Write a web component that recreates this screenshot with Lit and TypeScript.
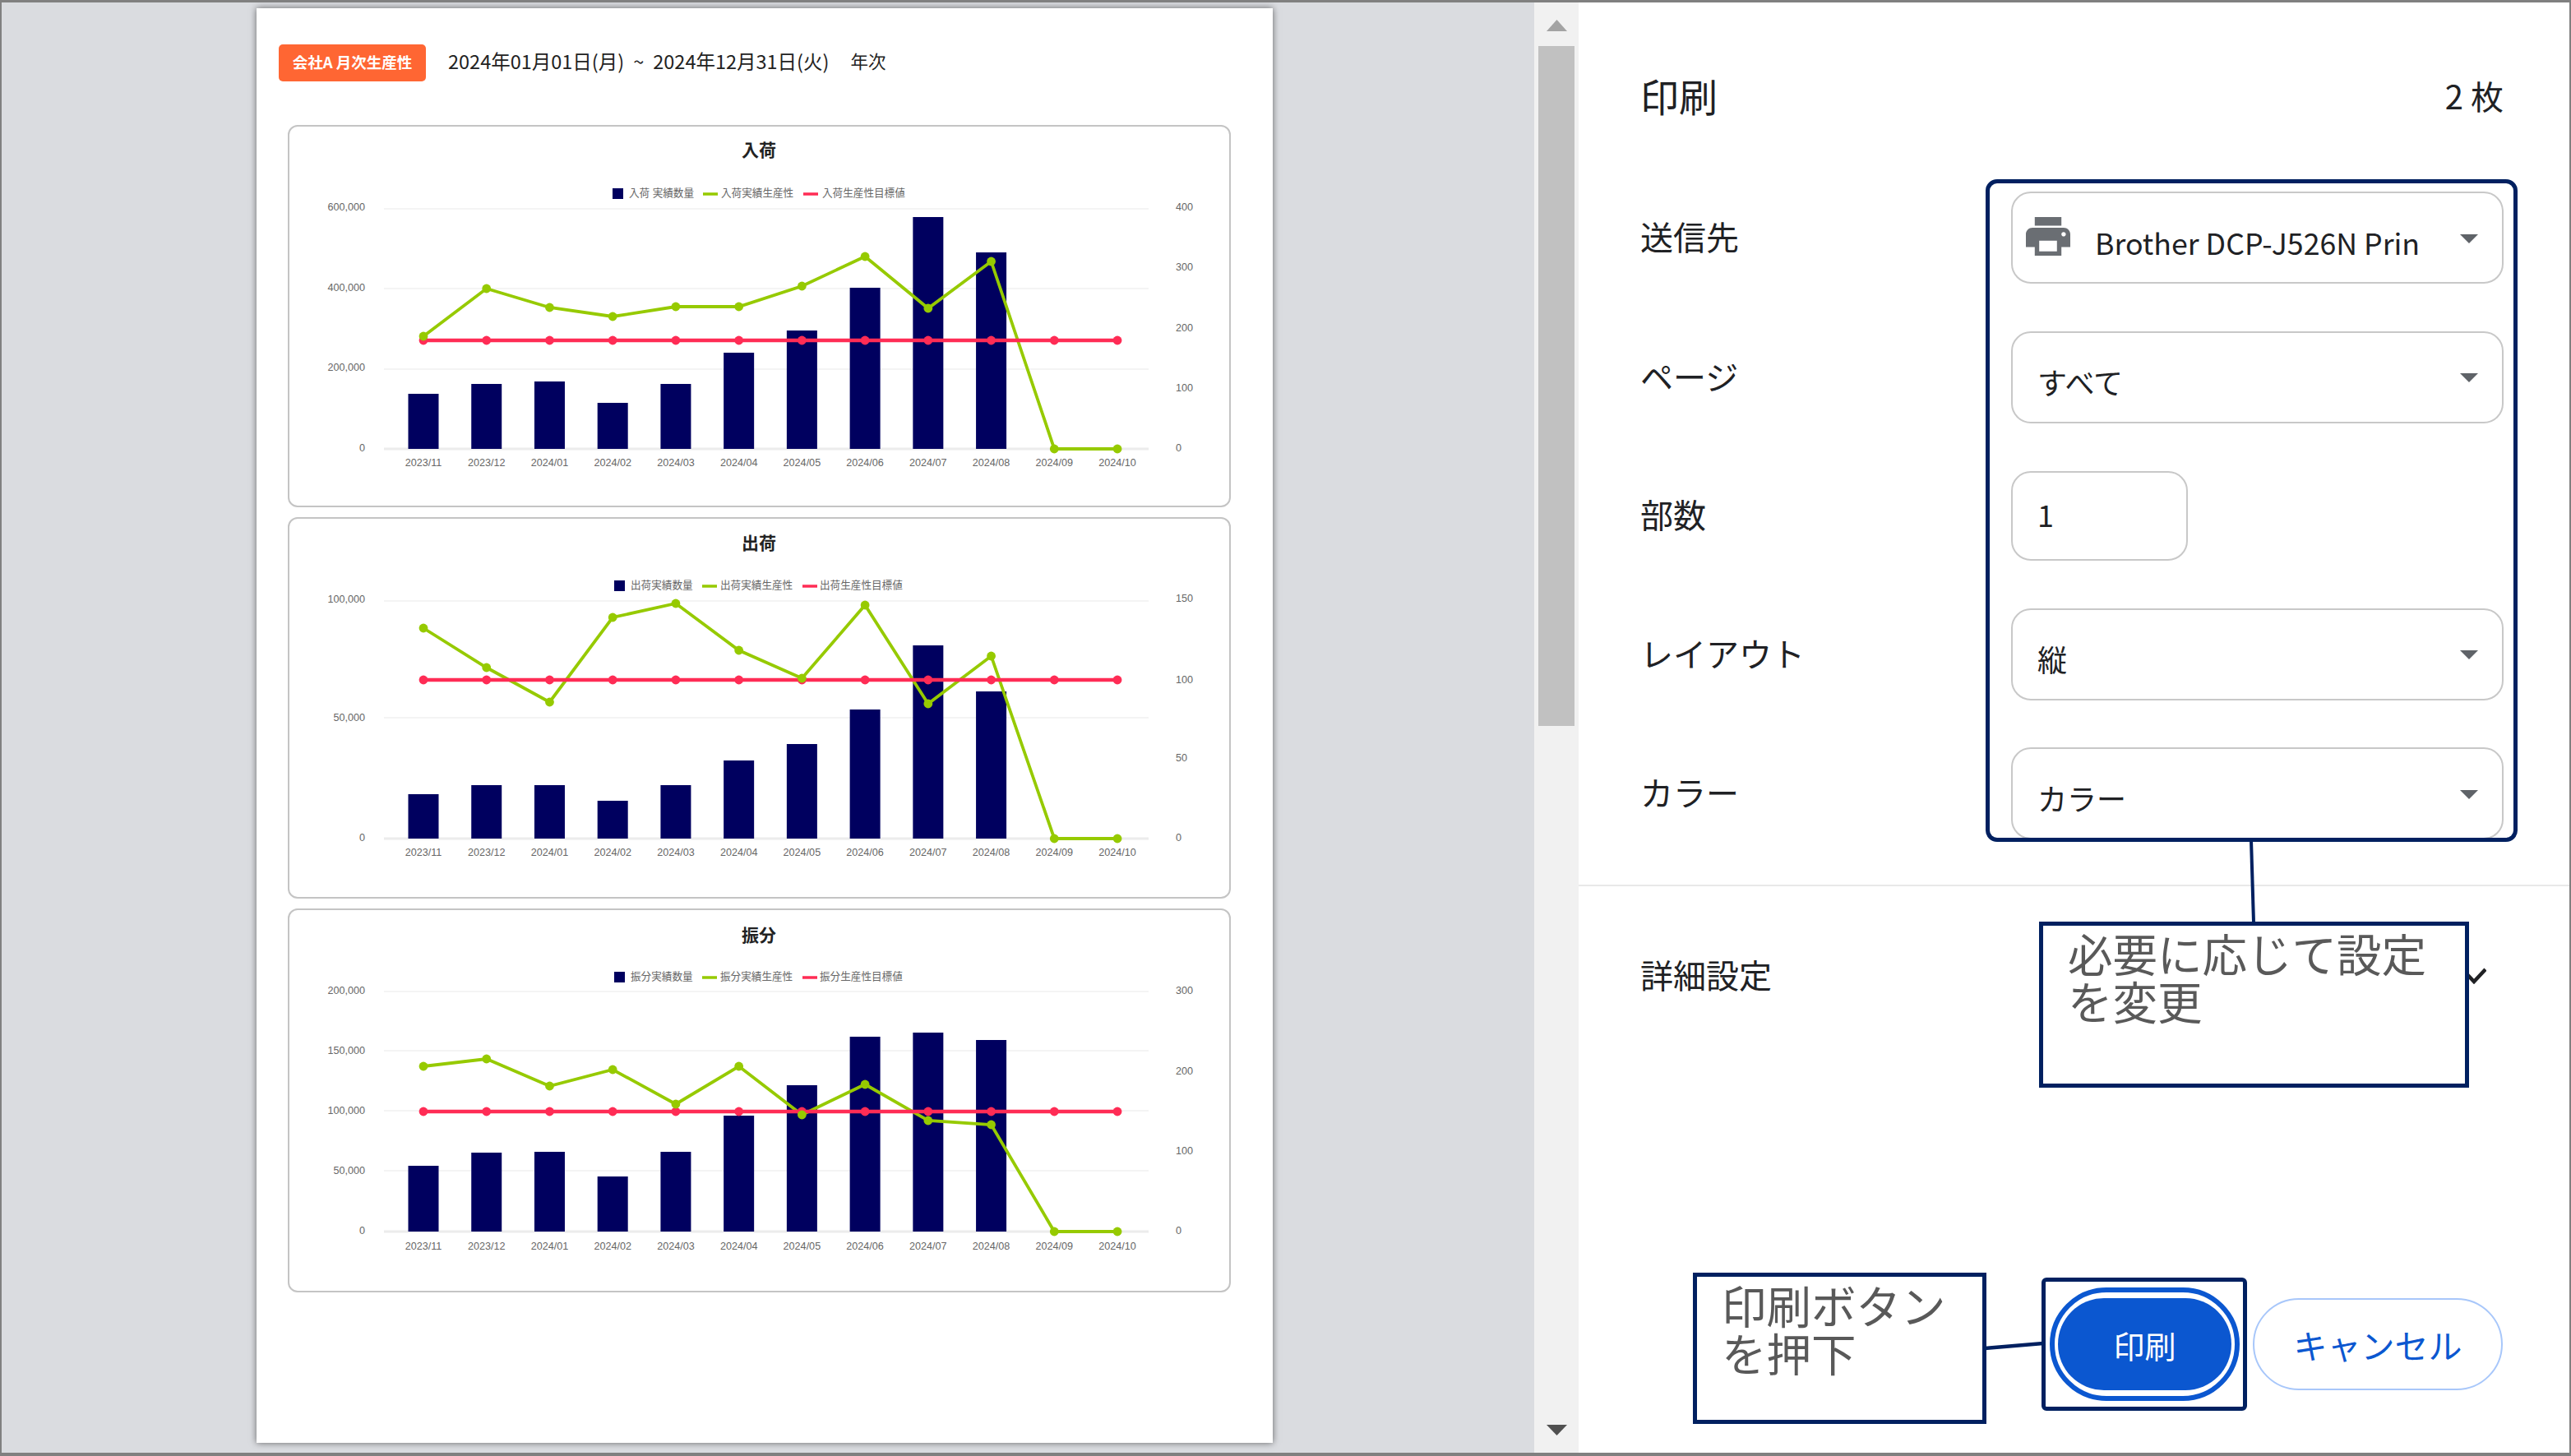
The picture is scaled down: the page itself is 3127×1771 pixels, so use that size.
import { LitElement, html, css, svg } from "lit";
import { customElement } from "lit/decorators.js";

const CATS = ["2023/11","2023/12","2024/01","2024/02","2024/03","2024/04","2024/05","2024/06","2024/07","2024/08","2024/09","2024/10"];
const X0 = 515, STEP = 76.73;
const cx = (i: number) => X0 + i * STEP;

interface Chart {
  title: string; top: number; h: number; titleY: number; legendY: number; xLabelY: number;
  legend: number[]; names: string[];
  grid: number[]; left: [string, number][]; right: [string, number][];
  bars: number[]; green: number[]; red: number;
}

const CHARTS: Chart[] = [
  { title: "入荷", top: 152, h: 465, titleY: 181, legendY: 235, xLabelY: 563,
    legend: [745, 765, 855, 877, 977, 1000],
    names: ["入荷 実績数量", "入荷実績生産性", "入荷生産性目標値"],
    grid: [254, 351, 449, 546],
    left: [["600,000", 252], ["400,000", 350], ["200,000", 447], ["0", 545]],
    right: [["400", 252], ["300", 325], ["200", 399], ["100", 472], ["0", 545]],
    bars: [479, 467, 464, 490, 467, 429, 402, 350, 264, 307],
    green: [409, 351, 374, 385, 373, 373, 348, 312, 375, 318, 546, 546], red: 414 },
  { title: "出荷", top: 630, h: 464, titleY: 660, legendY: 713, xLabelY: 1038,
    legend: [747, 767, 854, 876, 976, 997],
    names: ["出荷実績数量", "出荷実績生産性", "出荷生産性目標値"],
    grid: [732, 874, 1021],
    left: [["100,000", 730], ["50,000", 874], ["0", 1020]],
    right: [["150", 729], ["100", 828], ["50", 923], ["0", 1020]],
    bars: [967, 956, 956, 975, 956, 926, 906, 864, 786, 842],
    green: [765, 813, 855, 752, 735, 792, 826, 737, 857, 799, 1021, 1021], red: 828 },
  { title: "振分", top: 1105, h: 467, titleY: 1136, legendY: 1188, xLabelY: 1516,
    legend: [747, 767, 854, 876, 976, 997],
    names: ["振分実績数量", "振分実績生産性", "振分生産性目標値"],
    grid: [1206, 1278, 1351, 1424, 1498],
    left: [["200,000", 1205], ["150,000", 1278], ["100,000", 1351], ["50,000", 1424], ["0", 1497]],
    right: [["300", 1205], ["200", 1303], ["100", 1400], ["0", 1497]],
    bars: [1418, 1402, 1401, 1431, 1401, 1357, 1320, 1261, 1256, 1265],
    green: [1297, 1288, 1321, 1301, 1343, 1297, 1356, 1319, 1363, 1368, 1498, 1498], red: 1352 },
];

const NAVY = "#00005f", GREEN = "#96ca00", RED = "#ff2c55";

function chart(c: Chart) {
  const base = c.grid[c.grid.length - 1];
  const greenPts = c.green.map((y, i) => `${cx(i)},${y}`).join(" ");
  const [sq, t1, g, t2, r, t3] = c.legend;
  return html`
    <div class="card">
      <svg class="plot" width="1143" height=${c.h - 4} viewBox="352 ${c.top + 2} 1143 ${c.h - 4}">
        <text class="ctitle" x="923" y=${c.titleY}>${c.title}</text>
        ${svg`
          <rect x=${sq} y=${c.legendY - 6} width="13" height="13" fill=${NAVY}></rect>
          <text class="tick" x=${t1} y=${c.legendY}>${c.names[0]}</text>
          <line x1=${g} x2=${g + 18} y1=${c.legendY + 1} y2=${c.legendY + 1} stroke=${GREEN} stroke-width="3.5"></line>
          <text class="tick" x=${t2} y=${c.legendY}>${c.names[1]}</text>
          <line x1=${r} x2=${r + 18} y1=${c.legendY + 1} y2=${c.legendY + 1} stroke=${RED} stroke-width="3.5"></line>
          <text class="tick" x=${t3} y=${c.legendY}>${c.names[2]}</text>
          ${c.grid.map((y) => svg`<line x1="467" x2="1397" y1=${y} y2=${y} stroke=${y === base ? "#ececec" : "#f4f4f4"} stroke-width=${y === base ? 3 : 2}></line>`)}
          ${c.left.map(([t, y]) => svg`<text class="tick end" x="444" y=${y}>${t}</text>`)}
          ${c.right.map(([t, y]) => svg`<text class="tick" x="1430" y=${y}>${t}</text>`)}
          ${CATS.map((t, i) => svg`<text class="tick mid" x=${cx(i)} y=${c.xLabelY}>${t}</text>`)}
          ${c.bars.map((y, i) => svg`<rect x=${cx(i) - 18.5} y=${y} width="37" height=${base - y} fill=${NAVY}></rect>`)}
          <polyline points=${greenPts} fill="none" stroke=${GREEN} stroke-width="3.8"></polyline>
          <line x1=${cx(0)} x2=${cx(11)} y1=${c.red} y2=${c.red} stroke=${RED} stroke-width="4.5"></line>
          ${CATS.map((_, i) => svg`<circle cx=${cx(i)} cy=${c.red} r="5.4" fill=${RED}></circle>`)}
          ${c.green.map((y, i) => svg`<circle cx=${cx(i)} cy=${y} r="5.4" fill=${GREEN}></circle>`)}
        `}
      </svg>
    </div>`;
}

const caret = html`<svg class="caret" viewBox="0 0 22 11"><path d="M0 0H22L11 11Z"></path></svg>`;

@customElement("app-root")
export class AppRoot extends LitElement {
  static styles = css`
    :host { display: block; width: 3127px; height: 1771px; font-family: "Noto Sans CJK JP", "Noto Sans", sans-serif; color: #202124; }
    .stage { position: relative; width: 3127px; height: 1771px; overflow: hidden; }
    .frame { box-sizing: border-box; width: 3127px; height: 1771px; display: flex; background: #fff;
      border: 2px solid #808080; border-top-width: 3px; border-bottom-width: 4px; }
    .preview { width: 1864px; flex: none; background: #dadce0; overflow: hidden; padding: 7px 0 0 310px; box-sizing: border-box; }
    .page { width: 1236px; height: 1745px; background: #fff; box-shadow: 0 0 8px rgba(0,0,0,.55); padding-top: 44px; box-sizing: border-box; }
    .head { display: flex; align-items: center; padding-left: 27px; height: 45px; margin-bottom: 53px; }
    .badge { width: 179px; height: 45px; box-sizing: border-box; background: #ff6633; color: #fff; border-radius: 5px; padding-bottom: 3px;
      font-size: 18.5px; font-weight: 700; display: flex; align-items: center; justify-content: center; white-space: nowrap; }
    .date { margin-left: 27px; margin-bottom: 6px; font-size: 23.5px; color: #222; white-space: nowrap; }
    .sep { margin: 0 11px; }
    .kind { margin-left: 26px; margin-bottom: 6px; font-size: 21.5px; color: #222; }
    .card { box-sizing: border-box; width: 1147px; margin-left: 38px; border: 2px solid #c4c4c4; border-radius: 12px; background: #fff; }
    .plot { display: block; }
    .card + .card { margin-top: 12px; }
    .ctitle { font-family: "Noto Sans CJK JP", sans-serif; font-size: 21px; font-weight: 700; text-anchor: middle; dominant-baseline: central; fill: #222; }
    .tick { font-family: "Liberation Sans", "Noto Sans CJK JP", sans-serif; font-size: 12.6px; fill: #666; dominant-baseline: central; }
    .end { text-anchor: end; }
    .mid { text-anchor: middle; }
    .scroll { width: 54px; flex: none; background: #f1f1f1; display: flex; flex-direction: column; align-items: center; }
    .arrow-up { width: 25px; height: 14px; margin-top: 21px; fill: #a3a3a3; display: block; }
    .thumb { width: 44px; height: 827px; margin-top: 18px; background: #c1c1c1; }
    .arrow-down { width: 25px; height: 13px; margin-top: auto; margin-bottom: 21px; fill: #505050; display: block; }
    .panel { flex: 1; display: flex; flex-direction: column; min-width: 0; }
    .top { height: 230px; flex: none; box-sizing: border-box; padding: 83px 80px 0 75px; display: flex; justify-content: space-between; }
    .top h1 { margin: 0; font-size: 47px; font-weight: 400; line-height: 60px; }
    .count { font-size: 40px; line-height: 60px; }
    .fields { display: flex; flex-direction: column; gap: 57.5px; padding-left: 76px; }
    .row { display: grid; grid-template-columns: 450px 599px; align-items: center; height: 112px; font-size: 40px; }
    .row.short { height: 110px; }
    .label { line-height: 56px; white-space: nowrap; margin: 0 0 4px -1px; }
    .ctl { box-sizing: border-box; height: 112px; border: 2px solid #c8c8c8; border-radius: 24px; display: flex; align-items: center; padding: 0 29px 0 30px; font-size: 36px; }
    .ctl.printer { padding-left: 16px; }
    .ctl.num { width: 215px; height: 109px; }
    .val { flex: 1; padding-top: 10px; line-height: 50px; white-space: nowrap; overflow: hidden; }
    .printer .val { font-size: 35.7px; padding-top: 12px; }
    .num .val { padding-top: 0; padding-bottom: 4px; }
    .pic { width: 54px; height: 47px; flex: none; margin-right: 30px; fill: #6a6e73; margin-top: -4px; }
    .caret { width: 22px; height: 11px; flex: none; fill: #5f6368; margin-top: 2px; }
    .more { margin-top: 55px; height: 218px; flex: none; border-top: 2px solid #e8e8e8; padding: 0 101px 0 75px; display: flex; align-items: center; justify-content: space-between; font-size: 40px; }
    .more > div { margin-bottom: 4px; }
    .chev { width: 30px; height: 20px; fill: none; stroke: #202124; stroke-width: 4.5; }
    .foot { margin-top: auto; padding: 0 81px 76px 0; display: flex; justify-content: flex-end; gap: 26px; }
    .btn { box-sizing: border-box; height: 112px; border-radius: 56px; display: flex; align-items: center; justify-content: center; font-size: 38px; }
    .print { width: 211px; background: #0b57d0; color: #fff; position: relative; }
    .print::before { content: ""; position: absolute; inset: -13px -10px; border: 6px solid #0b57d0; border-radius: 70px; }
    .cancel { width: 304px; border: 2px solid #a8c7fa; color: #0b57d0; font-size: 41px; background: #fff; }
    .mark { position: absolute; box-sizing: border-box; border: 5px solid #002060; }
    .sel { left: 2415px; top: 218px; width: 647px; height: 806px; border-radius: 14px; }
    .pick { left: 2483px; top: 1554px; width: 250px; height: 162px; border-radius: 6px; }
    .note { background: #fff; color: #595959; font-size: 54.5px; line-height: 58px; padding: 4px 0 0 30px; white-space: nowrap; }
    .note-a { left: 2480px; top: 1121px; width: 523px; height: 202px; }
    .note-b { left: 2059px; top: 1548px; width: 357px; height: 184px; padding-top: 5px; }
    .wires { position: absolute; left: 0; top: 0; width: 3127px; height: 1771px; pointer-events: none; }
  `;

  render() {
    return html`
      <div class="stage">
        <div class="frame">
          <div class="preview">
            <div class="page">
              <div class="head">
                <div class="badge">会社A 月次生産性</div>
                <div class="date">2024年01月01日(月)<span class="sep">~</span>2024年12月31日(火)</div>
                <div class="kind">年次</div>
              </div>
              ${CHARTS.map(chart)}
            </div>
          </div>
          <div class="scroll">
            <svg class="arrow-up" viewBox="0 0 25 14"><path d="M12.5 0L25 14H0Z"></path></svg>
            <div class="thumb"></div>
            <svg class="arrow-down" viewBox="0 0 25 13"><path d="M0 0H25L12.5 13Z"></path></svg>
          </div>
          <div class="panel">
            <div class="top"><h1>印刷</h1><div class="count">2 枚</div></div>
            <div class="fields">
              <div class="row">
                <div class="label">送信先</div>
                <div class="ctl printer">
                  <svg class="pic" viewBox="2 3 20 18" preserveAspectRatio="none"><path d="M19 8H5c-1.66 0-3 1.34-3 3v6h4v4h12v-4h4v-6c0-1.66-1.34-3-3-3zm-3 11H8v-5h8v5zm3-7c-.55 0-1-.45-1-1s.45-1 1-1 1 .45 1 1-.45 1-1 1zm-1-9H6v4h12V3z"></path></svg>
                  <div class="val">Brother DCP-J526N Prin</div>${caret}
                </div>
              </div>
              <div class="row"><div class="label">ページ</div><div class="ctl"><div class="val">すべて</div>${caret}</div></div>
              <div class="row short"><div class="label">部数</div><div class="ctl num"><div class="val">1</div></div></div>
              <div class="row"><div class="label">レイアウト</div><div class="ctl"><div class="val">縦</div>${caret}</div></div>
              <div class="row"><div class="label">カラー</div><div class="ctl"><div class="val">カラー</div>${caret}</div></div>
            </div>
            <div class="more">
              <div>詳細設定</div>
              <svg class="chev" viewBox="0 0 30 20"><path d="M1 2L15 17L29 2"></path></svg>
            </div>
            <div class="foot">
              <div class="btn print">印刷</div>
              <div class="btn cancel">キャンセル</div>
            </div>
          </div>
        </div>
        <svg class="wires" viewBox="0 0 3127 1771">
          <path d="M2738 1022L2741 1122" stroke="#002060" stroke-width="4" fill="none"></path>
          <path d="M2414 1640L2485 1634" stroke="#002060" stroke-width="4.5" fill="none"></path>
        </svg>
        <div class="mark sel"></div>
        <div class="mark pick"></div>
        <div class="mark note note-a">必要に応じて設定<br />を変更</div>
        <div class="mark note note-b">印刷ボタン<br />を押下</div>
      </div>
    `;
  }
}
